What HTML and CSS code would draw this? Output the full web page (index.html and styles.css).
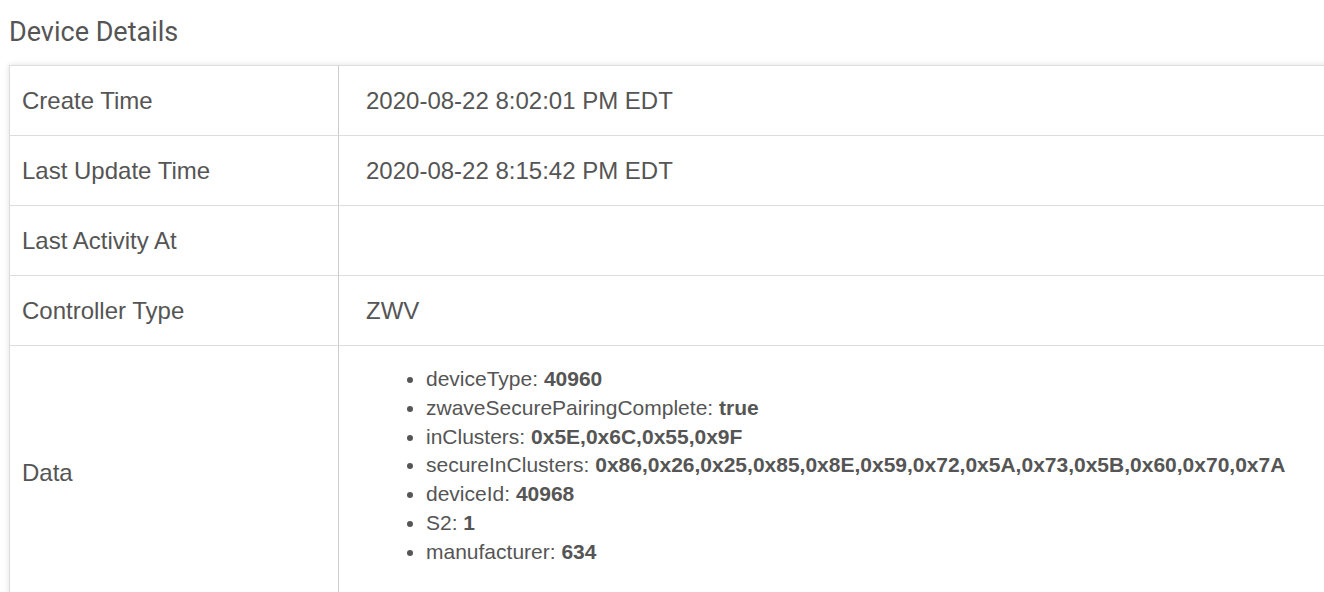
FILE: index.html
```html
<!DOCTYPE html>
<html lang="en">
<head>
<meta charset="utf-8">
<title>Device Details</title>
<link rel="stylesheet" href="styles.css">
</head>
<body>
<div class="page">
  <h2 class="title">Device Details</h2>
  <div class="details">
    <div class="label">Create Time</div>
    <div class="value">2020-08-22 8:02:01 PM EDT</div>
    <div class="label">Last Update Time</div>
    <div class="value">2020-08-22 8:15:42 PM EDT</div>
    <div class="label">Last Activity At</div>
    <div class="value"></div>
    <div class="label">Controller Type</div>
    <div class="value">ZWV</div>
    <div class="label">Data</div>
    <div class="value data">
      <ul class="data-list">
        <li>deviceType: <b>40960</b></li>
        <li>zwaveSecurePairingComplete: <b>true</b></li>
        <li>inClusters: <b>0x5E,0x6C,0x55,0x9F</b></li>
        <li>secureInClusters: <b>0x86,0x26,0x25,0x85,0x8E,0x59,0x72,0x5A,0x73,0x5B,0x60,0x70,0x7A</b></li>
        <li>deviceId: <b>40968</b></li>
        <li>S2: <b>1</b></li>
        <li>manufacturer: <b>634</b></li>
      </ul>
    </div>
  </div>
</div>
</body>
</html>
```

FILE: styles.css
```css
html, body {
  margin: 0;
  padding: 0;
  background: #fff;
  overflow: hidden;
}

.page {
  padding: 14px 0 0 9px;
  width: 1360px;
}

.title {
  margin: 0 0 15px 0;
  font-family: Roboto, "Liberation Sans", sans-serif;
  font-weight: 400;
  font-size: 27px;
  line-height: 36px;
  color: #555;
}

.details {
  display: grid;
  grid-template-columns: 329px 1fr;
  border-top: 1px solid #ddd;
  border-left: 1px solid #ddd;
  box-shadow: 0 0 6px rgba(0, 0, 0, 0.13);
  font-family: "Liberation Sans", Arial, sans-serif;
  color: #555;
  background: #fff;
}

.label,
.value {
  box-sizing: border-box;
  min-height: 70px;
  border-bottom: 1px solid #ddd;
  display: flex;
  align-items: center;
  font-size: 24px;
}

.label {
  padding-left: 12px;
  border-right: 1px solid #ccc;
}

.value {
  padding-left: 27px;
}

.value.data {
  display: block;
  padding: 12px 0 12px 27px;
}

.data-list {
  margin: 7px 0 21px 0;
  padding-left: 60px;
  font-size: 21px;
  line-height: 28.8px;
}

.data-list b {
  font-weight: 700;
}
```
